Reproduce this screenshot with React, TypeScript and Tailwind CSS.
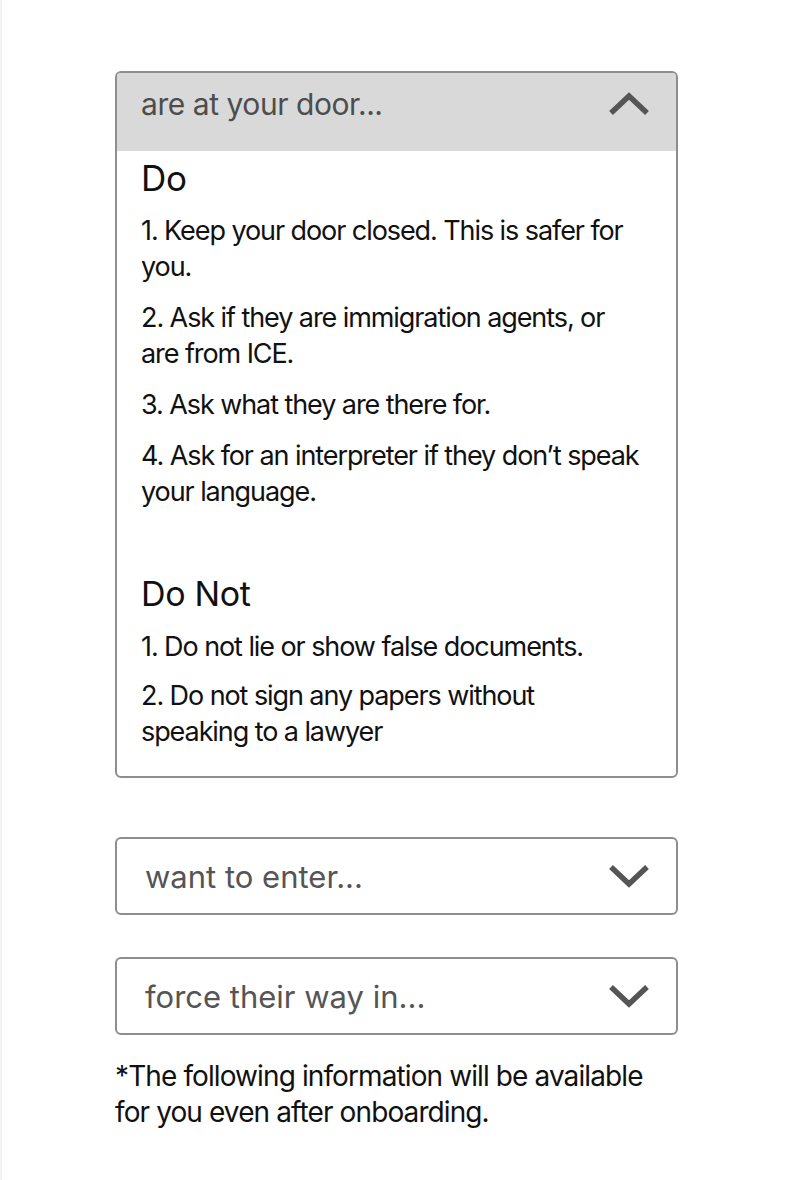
import React from "react";

const ChevronUp = () => (
  <svg width="42" height="24" viewBox="0 0 42 24" fill="none">
    <path d="M3 21 L21 4 L39 21" stroke="#555555" strokeWidth="5.5" strokeLinecap="butt" strokeLinejoin="miter" />
  </svg>
);

const ChevronDown = () => (
  <svg width="42" height="26" viewBox="0 0 42 26" fill="none">
    <path d="M3 4 L21 21 L39 4" stroke="#555555" strokeWidth="5.5" strokeLinecap="butt" strokeLinejoin="miter" />
  </svg>
);

const doItems = [
  "1. Keep your door closed. This is safer for you.",
  "2. Ask if they are immigration agents, or are from ICE.",
  "3. Ask what they are there for.",
  "4. Ask for an interpreter if they don\u2019t speak your language.",
];

const dontItems = [
  "1. Do not lie or show false documents.",
  "2. Do not sign any papers without speaking to a lawyer",
];

const Collapsed: React.FC<{ label: string }> = ({ label }) => (
  <div className="flex h-[78px] items-center justify-between rounded-[6px] border-2 border-[#8e8e8e] bg-white pl-[28px] pr-[26px]">
    <span className="text-[31px] leading-none tracking-[0em] text-[#555555]">{label}</span>
    <ChevronDown />
  </div>
);

export default function App() {
  return (
    <div
      className="min-h-[1180px] w-[786px] border-l-2 border-[#f3f3f3] bg-white"
      style={{ fontFamily: "Inter, 'Noto Sans', sans-serif" }}
    >
      <div className="ml-[113px] w-[563px] pt-[71px]">
        <div className="overflow-hidden rounded-[6px] border-2 border-[#8e8e8e]">
          <div className="flex h-[78px] items-center justify-between bg-[#d9d9d9] pb-[17px] pl-[24px] pr-[26px]">
            <span className="text-[30px] leading-none tracking-[-0.015em] text-[#4d4d4d]">are at your door...</span>
            <ChevronUp />
          </div>

          <div className="pb-[26px] pl-[24px] pr-[30px] pt-[9px] text-[#111111]">
            <h2 className="text-[35px] leading-[36px] tracking-[-0.01em]">Do</h2>
            <div className="mt-[17px] flex flex-col gap-[15px]">
              {doItems.map((t) => (
                <p key={t} className="text-[27px] leading-[36px] tracking-[-0.04em]">{t}</p>
              ))}
            </div>

            <h2 className="mt-[66px] text-[34px] leading-[36px] tracking-[-0.01em]">Do Not</h2>
            <div className="mt-[17px] flex flex-col gap-[13px]">
              {dontItems.map((t) => (
                <p key={t} className="text-[27px] leading-[36px] tracking-[-0.04em]">{t}</p>
              ))}
            </div>
          </div>
        </div>

        <div className="mt-[59px] flex flex-col gap-[42px]">
          <Collapsed label="want to enter..." />
          <Collapsed label="force their way in..." />
        </div>

        <p className="mt-[23px] text-[28px] leading-[36px] tracking-[-0.032em] text-[#111111]">
          *The following information will be available for you even after onboarding.
        </p>
      </div>
    </div>
  );
}
